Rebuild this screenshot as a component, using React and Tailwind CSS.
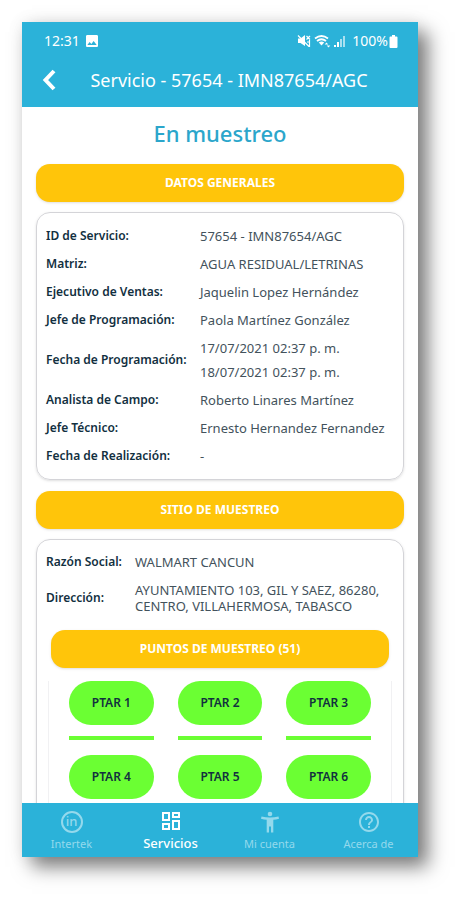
import { useState } from "react";
import { MdHelpOutline, MdImage } from "react-icons/md";

const datosGenerales = [
  { label: "ID de Servicio:", values: ["57654 - IMN87654/AGC"] },
  { label: "Matriz:", values: ["AGUA RESIDUAL/LETRINAS"] },
  { label: "Ejecutivo de Ventas:", values: ["Jaquelin Lopez Hernández"] },
  { label: "Jefe de Programación:", values: ["Paola Martínez González"] },
  {
    label: "Fecha de Programación:",
    values: ["17/07/2021 02:37 p. m.", "18/07/2021 02:37 p. m."],
  },
  { label: "Analista de Campo:", values: ["Roberto Linares Martínez"] },
  { label: "Jefe Técnico:", values: ["Ernesto Hernandez Fernandez"] },
  { label: "Fecha de Realización:", values: ["-"] },
];

const puntos = ["PTAR 1", "PTAR 2", "PTAR 3", "PTAR 4", "PTAR 5", "PTAR 6"];

const IntertekIcon = () => (
  <span className="flex h-[22px] w-[22px] items-center justify-center rounded-full border-2 border-current pb-px text-[13px] leading-none font-medium">
    in
  </span>
);

const ServiciosIcon = () => (
  <svg viewBox="0 0 20 20" className="h-5 w-5" fill="none" stroke="currentColor" strokeWidth="2">
    <path d="M2 2h6v7H2zM12 2h6v4h-6zM2 13h6v5H2zM12 10h6v8h-6z" />
  </svg>
);

const CuentaIcon = () => (
  <svg viewBox="0 0 20 22" className="h-[22px] w-5" fill="currentColor">
    <circle cx="10" cy="3" r="2.300" />
    <path d="M1.500 5.500Q10 7.500 18.500 5.500l.5 2.200q-3 .8-5.700 1V21.500h-2.300v-6H9v6H6.700V8.700q-2.700-.2-5.700-1z" />
  </svg>
);

const tabs = [
  { name: "Intertek", icon: <IntertekIcon /> },
  { name: "Servicios", icon: <ServiciosIcon /> },
  { name: "Mi cuenta", icon: <CuentaIcon /> },
  { name: "Acerca de", icon: <MdHelpOutline size={24} /> },
];

const MuteIcon = () => (
  <svg viewBox="0 0 14 14" className="h-[14px] w-[14px]" fill="currentColor">
    <path d="M1 4.500h2.500L8 1v11L3.500 9H1z" />
    <path
      d="M1 1.500l11 11M9.500 2l3.500 3.500M13 2L9.500 5.500M10 8h3M12.500 6v7"
      fill="none"
      stroke="currentColor"
      strokeWidth="1.2"
    />
  </svg>
);

const WifiIcon = () => (
  <svg viewBox="0 0 17 14" className="h-[14px] w-[17px]" fill="none" stroke="currentColor">
    <path d="M1 4.500Q7.500-.5 14 4.500" strokeWidth="1.800" />
    <path d="M3 7Q7.500 3.500 12 7" strokeWidth="1.800" />
    <path d="M4.800 8.500Q7.500 6.500 10.200 8.500L7.500 11.500z" fill="currentColor" stroke="none" />
    <path d="M12.500 8.500l1.800 2h-3.600zM14.500 13.500l-1.800-2h3.600z" fill="currentColor" stroke="none" />
  </svg>
);

const SignalIcon = () => (
  <svg viewBox="0 0 12 12" className="h-3 w-3" fill="currentColor">
    <path d="M0 10h2v2H0zM3 7h2v5H3z" />
    <path d="M6 4h2v8H6zM9 1h2v11H9z" opacity=".6" />
  </svg>
);

const BatteryIcon = () => (
  <svg viewBox="0 0 9 13" className="h-[13px] w-[9px]" fill="currentColor">
    <path d="M3 0h3v1.500h1.500a1 1 0 0 1 1 1V12a1 1 0 0 1-1 1h-6a1 1 0 0 1-1-1V2.500a1 1 0 0 1 1-1H3z" />
  </svg>
);

const SectionButton = ({ children }) => (
  <button
    type="button"
    className="block h-[38px] w-full rounded-[14px] bg-[#ffc50a] text-xs font-bold text-white shadow-sm"
  >
    {children}
  </button>
);

const App = () => {
  const [activeTab, setActiveTab] = useState("Servicios");

  return (
    <div className="h-screen bg-white pt-[22px] pr-[43px] pb-[43px] pl-[22px] font-['Noto_Sans',sans-serif]">
      <div className="flex h-full flex-col bg-white shadow-[10px_10px_18px_rgba(0,0,0,0.5),0_0_16px_rgba(0,0,0,0.08)]">
        <header className="bg-[#2bb2d9] text-white">
          <div className="flex h-[38px] items-center justify-between pr-5 pl-[22px] text-sm">
            <div className="flex items-center gap-1">
              <span>12:31</span>
              <MdImage size={16} />
            </div>
            <div className="flex items-center gap-[3px]">
              <MuteIcon />
              <WifiIcon />
              <SignalIcon />
              <span className="ml-[3px] flex items-center gap-px">
                100%
                <BatteryIcon />
              </span>
            </div>
          </div>
          <div className="flex h-[47px] items-center pb-2 pl-5">
            <button type="button" aria-label="Regresar">
              <svg viewBox="0 0 14 24" className="h-6 w-[14px]" fill="none" stroke="currentColor">
                <path d="M12 3L3.500 12l8.500 9" strokeWidth="4" />
              </svg>
            </button>
            <h1 className="flex-1 pr-4 text-center text-lg">
              Servicio - 57654 - IMN87654/AGC
            </h1>
          </div>
        </header>

        <main className="flex-1 overflow-y-auto px-[14px] [scrollbar-width:none]">
          <h2 className="flex h-[57px] items-center justify-center pb-1 text-[22px] font-medium text-[#2ba6cb]">
            En muestreo
          </h2>

          <SectionButton>DATOS GENERALES</SectionButton>
          <section className="mt-[10px] mb-[11px] rounded-[14px] border border-[#d4d4d8] px-[9px] py-[9px] shadow-sm">
            <table className="w-full text-left text-[#43525c]">
              <tbody>
                {datosGenerales.map((row) => (
                  <tr key={row.label}>
                    <th
                      scope="row"
                      className="w-[154px] text-xs leading-7 font-semibold whitespace-nowrap text-[#12303f]"
                    >
                      {row.label}
                    </th>
                    <td
                      className={
                        row.values.length > 1
                          ? "py-[2px] text-[13px] leading-6"
                          : "text-[13px] leading-7"
                      }
                    >
                      {row.values.map((value) => (
                        <div key={value}>{value}</div>
                      ))}
                    </td>
                  </tr>
                ))}
              </tbody>
            </table>
          </section>

          <SectionButton>SITIO DE MUESTREO</SectionButton>
          <section className="mt-[10px] rounded-[14px] border border-[#d4d4d8] px-[9px] pt-2 shadow-sm">
            <table className="w-full text-left text-[#43525c]">
              <tbody>
                <tr>
                  <th
                    scope="row"
                    className="w-[89px] text-xs leading-7 font-semibold whitespace-nowrap text-[#12303f]"
                  >
                    Razón Social:
                  </th>
                  <td className="text-[13px] leading-7">WALMART CANCUN</td>
                </tr>
                <tr>
                  <th scope="row" className="text-xs leading-7 font-semibold text-[#12303f]">
                    Dirección:
                  </th>
                  <td className="py-[6px] text-[13px] leading-4">
                    AYUNTAMIENTO 103, GIL Y SAEZ, 86280, CENTRO, VILLAHERMOSA, TABASCO
                  </td>
                </tr>
              </tbody>
            </table>

            <div className="mt-[10px] px-[5px]">
              <SectionButton>PUNTOS DE MUESTREO (51)</SectionButton>
            </div>
            <div className="mx-[2px] mt-[13px] grid grid-cols-3 gap-x-6 gap-y-[15px] border-x border-[#f1f1f3] px-5 pb-4">
              {puntos.map((punto) => (
                <div key={punto} className="border-b-4 border-[#6bff33] pb-[11px]">
                  <button
                    type="button"
                    className="block h-11 w-full rounded-full bg-[#6bff33] text-xs font-semibold text-[#12303f]"
                  >
                    {punto}
                  </button>
                </div>
              ))}
            </div>
          </section>
        </main>

        <nav className="grid h-[54px] grid-cols-4 bg-[#2bb2d9]">
          {tabs.map((tab) => (
            <button
              key={tab.name}
              type="button"
              onClick={() => setActiveTab(tab.name)}
              className={
                activeTab === tab.name
                  ? "flex flex-col items-center gap-[2px] pt-[6px] text-[13px] font-medium text-white"
                  : "flex flex-col items-center gap-[2px] pt-[7px] text-[11px] text-[#94d9ec]"
              }
            >
              <span className="flex h-6 items-center">{tab.icon}</span>
              <span className="leading-4">{tab.name}</span>
            </button>
          ))}
        </nav>
      </div>
    </div>
  );
};

export default App;
